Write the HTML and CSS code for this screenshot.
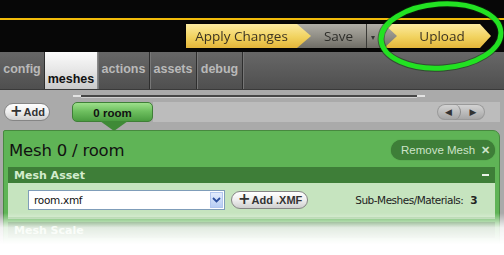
FILE: index.html
```html
<!DOCTYPE html>
<html>
<head>
<meta charset="utf-8">
<link rel="stylesheet" href="styles.css">
</head>
<body>
<div class="page">
  <header class="top">
    <div class="rule"></div>
    <div class="toolbar">
      <div class="crumb crumb-first yellow">Apply Changes</div>
      <div class="crumb gray save">Save</div>
      <div class="crumb gray more"><span class="caret">▾</span></div>
      <div class="crumb yellow upload">Upload</div>
    </div>
  </header>
  <nav class="tabs">
    <div class="tab t1">config</div>
    <div class="tab active">meshes</div>
    <div class="tab t3">actions</div>
    <div class="tab t4">assets</div>
    <div class="tab t5">debug</div>
    <div class="tab-fill"></div>
  </nav>
  <main class="content">
    <div class="track"><span class="track-end"></span><span class="track-line"></span><span class="track-end"></span></div>
    <div class="row">
      <div class="pill add"><span class="plus">+</span>Add</div>
      <div class="mesh-tab">0 room</div>
      <div class="strip">
        <div class="pager"><span class="pg">◀</span><span class="pg">▶</span></div>
      </div>
    </div>
    <section class="panel">
      <div class="panel-head">
        <h1 class="title">Mesh 0 / room</h1>
        <div class="remove">Remove Mesh <span class="x">✕</span></div>
      </div>
      <div class="section">
        <div class="section-head"><span>Mesh Asset</span><span class="minus"></span></div>
        <div class="section-body">
          <div class="select"><span class="sel-text">room.xmf</span><span class="sel-btn"><svg width="9" height="6" viewBox="0 0 9 6"><path d="M1 1 L4.5 4.5 L8 1" fill="none" stroke="#2d4f9e" stroke-width="1.8"/></svg></span></div>
          <div class="pill addxmf"><span class="plus">+</span>Add .XMF</div>
          <div class="count">Sub-Meshes/Materials: <b>3</b></div>
        </div>
      </div>
      <div class="section faded">
        <div class="section-head"><span>Mesh Scale</span></div>
      </div>
    </section>
    <div class="fade"></div>
  </main>
  <svg class="circle" width="132" height="76" viewBox="0 0 132 76">
    <ellipse cx="66" cy="37" rx="60" ry="32" fill="none" stroke="#0a3a0a" stroke-opacity="0.5" stroke-width="7" transform="rotate(-4 66 37)"/>
    <ellipse cx="66" cy="37" rx="60" ry="32" fill="none" stroke="#22e222" stroke-width="5" transform="rotate(-4 66 37)"/>
  </svg>
</div>
</body>
</html>
```
FILE: styles.css
```css
* { box-sizing: border-box; }
html, body { margin: 0; padding: 0; background: #fff; }
body { width: 504px; height: 255px; overflow: hidden; font-family: "DejaVu Sans", "Liberation Sans", sans-serif; }
.page { position: relative; width: 504px; height: 255px; overflow: hidden; }

.top { height: 52px; background: #070707; padding-top: 18px; }
.rule { height: 2px; background: #f2bb0a; }
.toolbar { display: flex; margin: 4px 0 0 186px; height: 24px; filter: drop-shadow(0 0 1px #000); }
.crumb { flex-shrink: 0; height: 24px; display: flex; align-items: center; justify-content: center; font-family: "Open Sans", "DejaVu Sans", sans-serif; font-size: 13.5px; color: #3b3322; position: relative; white-space: nowrap; }
.yellow { background: linear-gradient(#fbeaa0, #f1d25e 55%, #e3b53a); }
.gray { background: linear-gradient(#b0aea6, #8e8c84 55%, #6f6d66); color: #2e2e2a; }
.crumb-first { width: 125px; padding-right: 14px; clip-path: polygon(0 0, 111px 0, 125px 50%, 111px 100%, 0 100%); z-index: 4; }
.save { width: 70px; margin-left: -14px; padding-left: 14px; border-right: 1px solid #3a3a36; z-index: 3; }
.more { width: 30px; padding-left: 4px; justify-content: flex-start; clip-path: polygon(0 0, 17px 0, 30px 50%, 17px 100%, 0 100%); z-index: 2; }
.caret { font-size: 8px; color: #333; }
.upload { width: 108px; margin-left: -14px; padding-left: 10px; clip-path: polygon(0 0, 97px 0, 108px 50%, 97px 100%, 0 100%); z-index: 1; }

.tabs { height: 38px; display: flex; background: linear-gradient(#676767, #4f4f4f); border-bottom: 1px solid #3a3a3a; }
.tab { flex-shrink: 0; display: flex; align-items: center; justify-content: center; padding-bottom: 4px; height: 100%; font-family: "Liberation Sans", sans-serif; font-size: 12.5px; font-weight: bold; color: #b9b9b9; border-right: 1px solid #2e2e2e; box-shadow: inset 1px 0 0 #777; white-space: nowrap; }
.t1 { width: 45px; box-shadow: none; }
.t3 { width: 52px; }
.t4 { width: 47px; }
.t5 { width: 46px; }
.tab.active { width: 53px; background: linear-gradient(#fbfbfb, #e6e6e6 50%, #c9c9c9); color: #111; align-items: flex-end; padding-bottom: 3px; box-shadow: none; border-right: 1px solid #888; }
.tab-fill { flex: 1; box-shadow: inset 1px 0 0 #777; }

.content { position: relative; background: #aaaaaa; height: 165px; padding: 5px 4px 0 3px; }
.track { display: flex; height: 3px; margin: 0 0 4px 70px; width: 352px; }
.track-end { width: 8px; background: #e2e2e2; height: 2px; }
.track-line { flex: 1; background: #464646; height: 2px; box-shadow: 0 1px 0 #d0d0d0; }
.row { display: flex; align-items: center; height: 20px; margin-bottom: 8px; }
.pill { flex-shrink: 0; white-space: nowrap; display: flex; align-items: center; height: 18px; border-radius: 9px; border: 1px solid #858585; background: linear-gradient(#ffffff, #eeeeee 50%, #cfcfcf); font-family: "Liberation Sans", sans-serif; font-weight: bold; font-size: 11px; color: #333; }
.plus { font-family: "DejaVu Sans", sans-serif; font-size: 15px; font-weight: bold; margin-right: 1px; line-height: 1; position: relative; top: -1px; }
.add { width: 46px; padding-left: 5px; margin-left: 1px; }
.mesh-tab { position: relative; margin-left: 22px; width: 81px; height: 20px; border: 1px solid #3f7f37; border-radius: 5px; background: linear-gradient(#9ee08c, #6fc060 45%, #4a9c40); display: flex; align-items: center; justify-content: center; font-family: "Liberation Sans", sans-serif; font-weight: bold; font-size: 11.5px; color: #111; padding-top: 1px; }
.mesh-tab::after { content: ""; position: absolute; left: 27px; top: 18px; border-left: 14px solid transparent; border-right: 14px solid transparent; border-top: 10px solid #3f8a36; }
.strip { flex: 1; height: 20px; background: #bcbcbc; display: flex; justify-content: flex-end; align-items: center; padding-right: 15px; }
.pager { display: flex; height: 16px; border-radius: 8px; background: linear-gradient(#d6d6d6, #a3a3a3); box-shadow: 0 0 0 1px #9a9a9a inset; }
.pg { width: 24px; display: flex; align-items: center; justify-content: center; font-size: 9px; color: #333; }
.pg:first-child { border-right: 1px solid #8a8a8a; border-radius: 8px; }

.panel { background: #5fb456; border: 1px solid #47893f; border-radius: 2px 7px 0 0; height: 140px; padding: 0 4px 0 4px; }
.panel-head { display: flex; justify-content: space-between; align-items: center; height: 36px; padding: 2px 0 0 1px; }
.title { margin: 0; font-family: "DejaVu Sans", sans-serif; font-weight: normal; font-size: 16.5px; color: #111; letter-spacing: -0.2px; }
.remove { flex-shrink: 0; white-space: nowrap; height: 20px; width: 104px; border-radius: 10px; background: #3e7e38; color: #cde3c9; font-family: "Liberation Sans", sans-serif; font-size: 11.5px; display: flex; align-items: center; padding-left: 10px; gap: 6px; box-shadow: 0 0 1px #2f6a2a; }
.x { font-weight: bold; font-size: 11px; }
.section-head { height: 16px; background: #3e7e38; color: #d3eccd; font-size: 11px; font-weight: bold; display: flex; justify-content: space-between; align-items: center; padding: 0 6px; }
.minus { width: 7px; height: 2px; background: #e8f2e6; }
.section-body { height: 36px; background: #c6e4bf; border-bottom: 2px solid #a6cf9e; display: flex; align-items: center; padding: 0 18px 0 20px; }
.select { flex-shrink: 0; width: 197px; height: 20px; background: #fff; border: 1px solid #7f9db9; display: flex; align-items: center; justify-content: space-between; padding: 1px; }
.sel-text { font-family: "DejaVu Sans", sans-serif; font-size: 10.5px; color: #111; padding-left: 4px; letter-spacing: -0.3px; }
.sel-btn { width: 13px; height: 16px; background: linear-gradient(#e3ecfd, #b7cdf4); border: 1px solid #b2c6ee; display: flex; align-items: center; justify-content: center; }
.addxmf { width: 77px; margin-left: 6px; padding-left: 6px; }
.count { margin-left: auto; white-space: nowrap; font-family: "DejaVu Sans", sans-serif; font-size: 10.5px; color: #222; letter-spacing: -0.5px; }
.count b { margin-left: 4px; }
.faded { margin-top: 3px; }
.fade { position: absolute; left: 0; right: 0; top: 123px; height: 42px; background: linear-gradient(rgba(255,255,255,0), rgba(255,255,255,0.85) 35%, #fff 75%); }

.circle { position: absolute; left: 375px; top: -1px; }
```
